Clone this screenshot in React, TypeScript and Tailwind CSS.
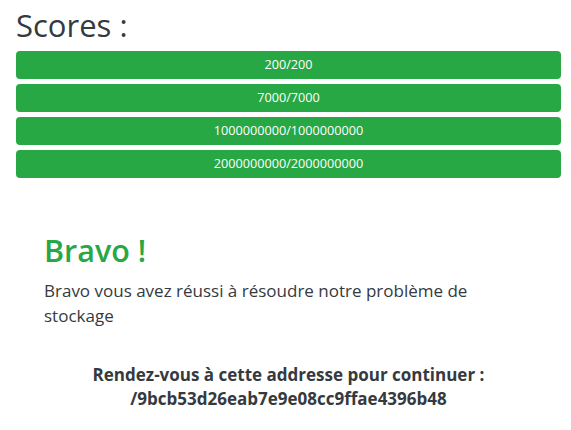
const scores = [
  "200/200",
  "7000/7000",
  "1000000000/1000000000",
  "2000000000/2000000000",
];

export default function App() {
  return (
    <div
      className="min-h-screen w-full bg-white pl-4 pr-[10px] text-[#343a40]"
      style={{ fontFamily: '"Open Sans", "Noto Sans", sans-serif' }}
    >
      <h2 className="pt-[6px] mb-[7px] text-[31px] leading-[38px] font-normal">Scores :</h2>

      <div className="flex flex-col gap-[5px]">
        {scores.map((s) => (
          <div
            key={s}
            className="flex h-7 items-center justify-center rounded-[4px] bg-[#28a745] text-[12.7px] text-white"
          >
            {s}
          </div>
        ))}
      </div>

      <div className="mt-[53px] px-7">
        <h2 className="mb-[9px] text-[30.5px] leading-[38px] font-semibold text-[#28a745]">Bravo !</h2>
        <p className="max-w-[450px] text-[17px] leading-[25px]">
          Bravo vous avez réussi à résoudre notre problème de stockage
        </p>
      </div>

      <div className="mt-[35px] text-center text-[17px] font-bold leading-6">
        <p>Rendez-vous à cette addresse pour continuer :</p>
        <p>/9bcb53d26eab7e9e08cc9ffae4396b48</p>
      </div>
    </div>
  );
}
